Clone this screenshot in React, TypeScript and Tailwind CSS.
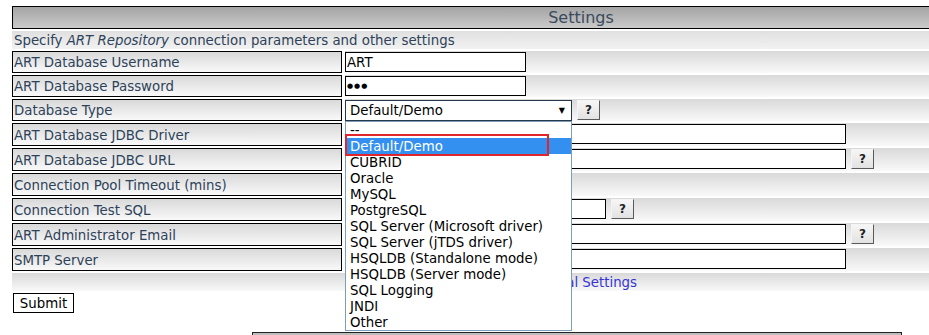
import * as React from "react";

type Row = {
  label: string;
  h: string;
  input?: string;
  value?: string;
  help?: boolean;
  select?: boolean;
};

const rows: Row[] = [
  { label: "ART Database Username", h: "h-[22px]", input: "w-[181px]", value: "ART" },
  { label: "ART Database Password", h: "h-[22px]", input: "w-[181px]", value: "•••" },
  { label: "Database Type", h: "h-[22px]", select: true, help: true },
  { label: "ART Database JDBC Driver", h: "h-[23px]", input: "w-[501px]" },
  { label: "ART Database JDBC URL", h: "h-[23px]", input: "w-[501px]", help: true },
  { label: "Connection Pool Timeout (mins)", h: "h-[23px]", input: "w-[50px]" },
  { label: "Connection Test SQL", h: "h-[23px]", input: "w-[261px]", help: true },
  { label: "ART Administrator Email", h: "h-[23px]", input: "w-[501px]", help: true },
  { label: "SMTP Server", h: "h-[23px]", input: "w-[501px]" },
];

const options = [
  "--",
  "Default/Demo",
  "CUBRID",
  "Oracle",
  "MySQL",
  "PostgreSQL",
  "SQL Server (Microsoft driver)",
  "SQL Server (jTDS driver)",
  "HSQLDB (Standalone mode)",
  "HSQLDB (Server mode)",
  "SQL Logging",
  "JNDI",
  "Other",
];

const cellBg = "bg-gradient-to-b from-[#d9d9d9] to-[#f9f9f9]";

function HelpButton() {
  return (
    <span className="ml-[5px] inline-flex h-[20px] w-[23px] items-center justify-center border border-t-[#f4f4f4] border-l-[#f4f4f4] border-b-[#5a5a5a] border-r-[#5a5a5a] bg-gradient-to-b from-[#f6f6f6] to-[#e2e2e2] text-[12px] font-bold text-[#222]">
      ?
    </span>
  );
}

function SettingRow({ row }: { row: Row }) {
  return (
    <div className={"flex gap-[3px] " + row.h}>
      <div
        className={
          "flex w-[330px] shrink-0 items-center border border-black pl-[1px] pt-[2px] text-[#2d4259] " +
          cellBg
        }>
        {row.label}
      </div>
      <div className={"flex flex-1 items-start pt-[1px] " + cellBg}>
        {row.select ? (
          <div className="flex h-[21px] w-[227px] items-center justify-between border border-[#26384c] bg-white pl-[4px] pr-[6px] pt-[1px] text-black">
            <span>Default/Demo</span>
            <span className="text-[8px]">▼</span>
          </div>
        ) : (
          <div
            className={
              "flex h-[20px] items-center border border-black bg-white pl-[1px] pt-[1px] text-black " +
              row.input
            }>
            {row.value === "•••" ? (
              <span className="text-[7px] tracking-[1px]">●●●</span>
            ) : (
              row.value
            )}
          </div>
        )}
        {row.help ? <HelpButton /> : null}
      </div>
    </div>
  );
}

export default function App() {
  return (
    <div className="relative h-[335px] w-[929px] overflow-hidden bg-white font-['DejaVu_Sans',Verdana,sans-serif] text-[13.33px] leading-none">
      <div className="ml-[12px] mt-[6px] flex w-[1138px] flex-col gap-[2px]">
        <div className="flex h-[23px] items-center justify-center border border-black bg-gradient-to-b from-[#a4a4a4] to-[#cacaca] pt-[1px] text-[16px] text-[#3a4a5e]">
          Settings
        </div>
        <div className="flex h-[18px] items-center bg-gradient-to-b from-[#e0e0e0] to-[#f2f2f2] pl-[2px] pt-[1px] text-[#2d4259]">
          Specify&nbsp;<i>ART Repository</i>&nbsp;connection parameters and other settings
        </div>
        {rows.map((r) => (
          <SettingRow key={r.label} row={r} />
        ))}
        <div className="flex h-[18px] items-center bg-gradient-to-b from-[#d9d9d9] to-[#f9f9f9] pt-[1px]">
          <div className="w-[625px] whitespace-nowrap text-right text-[#3535d4]">
            Show Additional Settings
          </div>
        </div>
      </div>
      <div className="ml-[13px] mt-[2px] flex h-[20px] w-[61px] items-center justify-center border border-black bg-white pt-[1px] text-black">
        Submit
      </div>
      <div className="ml-[252px] mt-[19px] h-[20px] w-[650px] border border-[#222] bg-[#bdbdbd]" />

      {/* open select list */}
      <div className="absolute left-[345px] top-[121px] flex w-[227px] flex-col border border-[#7f9db9] bg-white text-black">
        {options.map((o) => (
          <div
            key={o}
            className={
              "flex h-[16px] items-center pl-[4px] pt-[1px] " +
              (o === "Default/Demo" ? "bg-[#3390f0] text-white" : "")
            }>
            {o}
          </div>
        ))}
      </div>
      <div className="absolute left-[345px] top-[134px] h-[22px] w-[204px] border-2 border-[#e0262a]" />
    </div>
  );
}
